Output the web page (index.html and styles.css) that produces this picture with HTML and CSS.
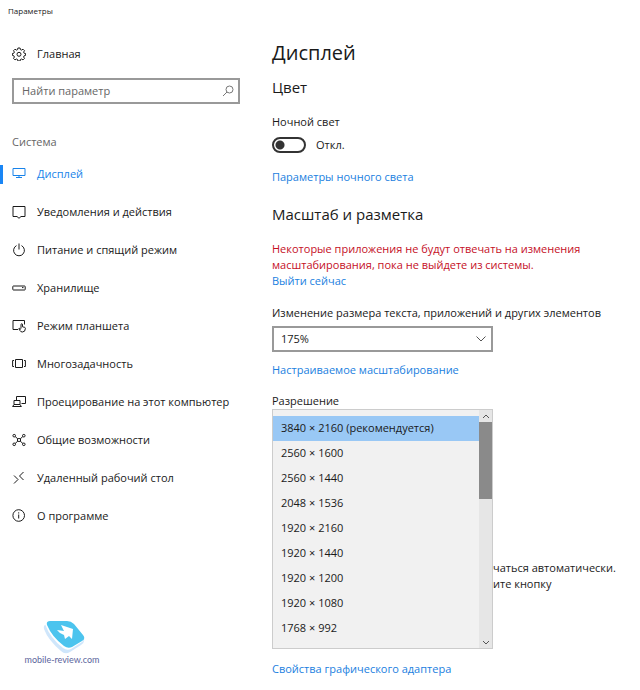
FILE: index.html
```html
<!DOCTYPE html>
<html lang="ru">
<head>
    <meta charset="UTF-8">
    <meta name="viewport" content="width=device-width, initial-scale=1.0">
    <title>Параметры</title>
    <link rel="stylesheet" href="styles.css">
</head>
<body>
    <header class="titlebar">Параметры</header>
    <div class="layout">
        <aside class="sidebar">
            <a class="home" href="#">
                <svg class="icon" viewBox="0 0 14 14"><path d="M5.9 1h2.2l.3 1.6 1.2.5 1.4-.9 1.5 1.5-.9 1.4.5 1.1 1.5.3v1.9l-1.5.4-.5 1.2.9 1.4-1.5 1.5-1.4-.9-1.2.5-.3 1.5H5.900l-.3-1.5-1.200-.5-1.400.9-1.500-1.500.9-1.400-.5-1.200L.4 8.400V6.500l1.500-.3.5-1.100-.9-1.400L3 2.200l1.400.9 1.200-.5z"/><circle cx="7" cy="7.300" r="2"/></svg>
                Главная
            </a>
            <form class="search">
                <input type="search" placeholder="Найти параметр" aria-label="Найти параметр">
                <button type="button" aria-label="Поиск">
                    <svg viewBox="0 0 12 12"><circle cx="7.500" cy="4.500" r="3.500"/><path d="M5 7L1 11"/></svg>
                </button>
            </form>
            <h2 class="group">Система</h2>
            <nav class="menu">
                <a class="active" href="#"><svg class="icon" viewBox="0 0 14 14"><path d="M1 1.500h12v7H1zM7 8.500v2M4 10.500h6"/></svg>Дисплей</a>
                <a href="#"><svg class="icon" viewBox="0 0 14 14"><path d="M1 1.500h12v10H9L7 13.300 5 11.500H1z"/></svg>Уведомления и действия</a>
                <a href="#"><svg class="icon" viewBox="0 0 14 14"><path d="M4.500 2.600a5.400 5.400 0 1 0 5 0M7 .5v6"/></svg>Питание и спящий режим</a>
                <a href="#"><svg class="icon" viewBox="0 0 14 14"><rect x=".8" y="5" width="12.400" height="4" rx=".6"/><path d="M10 6.600h1.500"/></svg>Хранилище</a>
                <a href="#"><svg class="icon" viewBox="0 0 14 14"><path d="M6 10.500H1v-9h11.500v4M9 9.500V5.200q.8-.9 1.500 0v2.600l2.300.6q.7.300.6 1.100-.1 3.500-3 3.500-1.800 0-2.500-1.500L6.800 9.600q.9-.9 2.200.9"/></svg>Режим планшета</a>
                <a href="#"><svg class="icon" viewBox="0 0 14 14"><path d="M3.500 2.500h7v8h-7zM2 3.500H.6v6H2M12 3.500h1.400v6H12"/></svg>Многозадачность</a>
                <a href="#"><svg class="icon" viewBox="0 0 14 14"><path d="M4.500 5.500v-4h9v7H9.500M2 5.500h6v4H2zM2 9.500L.6 11.500h8.800L8 9.500"/></svg>Проецирование на этот компьютер</a>
                <a href="#"><svg class="icon" viewBox="0 0 14 14"><circle cx="2.200" cy="2.700" r="1.300"/><circle cx="11.800" cy="2.700" r="1.300"/><circle cx="2.200" cy="11.300" r="1.300"/><circle cx="11.800" cy="11.300" r="1.300"/><path d="M3.200 3.600l2.300 2M10.800 3.600l-2.300 2M3.200 10.400l2.300-2M10.800 10.400l-2.300-2M5.500 5.600h3v2.800h-3z"/></svg>Общие возможности</a>
                <a href="#"><svg class="icon" viewBox="0 0 14 14"><path d="M2 4.500l4 4-4 4M11.500 1l-4 4 4 4"/></svg>Удаленный рабочий стол</a>
                <a href="#"><svg class="icon" viewBox="0 0 14 14"><circle cx="6.700" cy="6.500" r="5.800"/><path d="M6.700 5.500v4M6.700 3.300v1.200"/></svg>О программе</a>
            </nav>
            <a class="logo" href="#">
                <svg viewBox="0 0 42 34">
                    <path d="M1 9q-1-4 3-5l37 15q1 3-3 6l-11 7q-5 3-9-1Q5 20 1 9z" fill="#cfe6fb"/>
                    <path d="M2 4q0-3 4-3h20q4 0 6 3l8 12q2 4-1 6l-11 7q-4 2-8-1Q7 18 2 4z" fill="#fff"/>
                    <path d="M4 5q-1-4 3-4h17q4 0 7 3l9 11q3 4-1 6l-10 6q-4 2-8-1Q9 17 4 5z" fill="#4cc4ee"/>
                    <path d="M14 10l7 1-3-6 12 4-1 10-3-3-4 3-1-4-4-2z" fill="#fff"/>
                </svg>
                mobile-review.com
            </a>
        </aside>
        <main class="content">
            <h1>Дисплей</h1>
            <section>
                <h2>Цвет</h2>
                <label class="caption" for="night">Ночной свет</label>
                <div class="toggle">
                    <input type="checkbox" id="night">
                    <span>Откл.</span>
                </div>
                <a href="#">Параметры ночного света</a>
            </section>
            <section>
                <h2 class="scale">Масштаб и разметка</h2>
                <p class="warning">Некоторые приложения не будут отвечать на изменения масштабирования, пока не выйдете из системы.</p>
                <a href="#">Выйти сейчас</a>
                <label class="caption size" for="scale">Изменение размера текста, приложений и других элементов</label>
                <div class="dropdown">
                    <select id="scale">
                        <option>175%</option>
                    </select>
                    <svg viewBox="0 0 10 6"><path d="M.5.500L5 5 9.500.5"/></svg>
                </div>
                <a href="#">Настраиваемое масштабирование</a>
                <label class="caption resolution" for="resolution">Разрешение</label>
                <div class="displays">
                    <div class="listbox">
                        <select id="resolution" size="9">
                            <option selected>3840 × 2160 (рекомендуется)</option>
                            <option>2560 × 1600</option>
                            <option>2560 × 1440</option>
                            <option>2048 × 1536</option>
                            <option>1920 × 2160</option>
                            <option>1920 × 1440</option>
                            <option>1920 × 1200</option>
                            <option>1920 × 1080</option>
                            <option>1768 × 992</option>
                        </select>
                        <div class="scrollbar">
                            <button type="button" aria-label="Вверх"><svg viewBox="0 0 8 5"><path d="M1 4l3-3 3 3"/></svg></button>
                            <div class="thumb"></div>
                            <button type="button" class="down" aria-label="Вниз"><svg viewBox="0 0 8 5"><path d="M1 1l3 3 3-3"/></svg></button>
                        </div>
                    </div>
                    <p class="hint">чаться автоматически.<br>ите кнопку</p>
                </div>
                <a href="#">Свойства графического адаптера</a>
            </section>
        </main>
    </div>
</body>
</html>
```
FILE: styles.css
```css
* {
    box-sizing: border-box;
}
body {
    margin: 0;
    background: #fff;
    color: #1a1a1a;
    font: 11px/16px "Open Sans", "Noto Sans", sans-serif;
}
h1, h2, p {
    margin: 0;
    font-weight: normal;
}
a {
    color: #1a80e0;
    text-decoration: none;
}
svg {
    fill: none;
    stroke: currentColor;
}
input, select, button {
    font: inherit;
    color: inherit;
    border-radius: 0;
}
button {
    padding: 0;
    border: 0;
    background: none;
}
.titlebar {
    padding: 3px 8px;
    font-size: 8px;
}
.layout {
    display: grid;
    grid-template-columns: 272px 1fr;
}

/* Левая панель */
.home {
    display: flex;
    align-items: center;
    gap: 11px;
    margin-top: 22px;
    padding: 2px 12px;
    height: 20px;
    color: #1a1a1a;
}
.icon {
    flex: none;
    width: 14px;
    height: 14px;
}
.search {
    display: flex;
    align-items: center;
    margin: 14px 32px 0 12px;
    height: 26px;
    padding: 0 4px 0 8px;
    border: 2px solid #999;
    color: #666;
}
.search input {
    flex: 1;
    min-width: 0;
    padding: 0;
    border: 0;
    outline: 0;
    background: none;
    appearance: none;
}
.search input::placeholder {
    color: #666;
}
.search button, .search svg {
    display: block;
    width: 12px;
    height: 12px;
    color: #777;
}
.group {
    margin: 30px 12px 5px;
    font-size: 11px;
    line-height: 16px;
    color: #666;
}
.menu a {
    display: flex;
    align-items: center;
    gap: 11px;
    height: 38px;
    padding-left: 12px;
    color: #1a1a1a;
}
.menu .active {
    color: #1883ea;
    background: linear-gradient(#1a86f5, #1a86f5) 0 50% / 3px 19px no-repeat;
}
.logo {
    display: flex;
    flex-direction: column;
    align-items: center;
    width: 76px;
    margin: 85px 0 0 24px;
    font: 9px/12px Lato, sans-serif;
    white-space: nowrap;
    color: #5a649c;
}
.logo svg {
    width: 42px;
    height: 34px;
    margin-left: 4px;
    stroke: none;
}

/* Правая часть */
.content {
    padding: 17px 16px 12px 0;
}
.content a, .caption {
    display: block;
}
.content h1 {
    font-size: 20px;
    line-height: 28px;
    margin-bottom: 10px;
}
.content h2 {
    font-size: 15px;
    line-height: 20px;
    margin-bottom: 17px;
}
.content .scale {
    margin-top: 19px;
}
.toggle {
    display: flex;
    align-items: center;
    gap: 10px;
    margin: 6px 0 16px;
    height: 17px;
}
.toggle input {
    appearance: none;
    width: 34px;
    height: 16px;
    margin: 0;
    border: 2px solid #333;
    border-radius: 8px;
    background: radial-gradient(circle at 6px 50%, #333 4px, transparent 5px);
}
.warning {
    color: #c50f1f;
}
.size {
    margin-top: 16px;
}
.dropdown {
    display: grid;
    align-items: center;
    width: 221px;
    margin: 5px 0 10px;
}
.dropdown select, .dropdown svg {
    grid-area: 1 / 1;
}
.dropdown select {
    width: 100%;
    height: 26px;
    padding: 0 7px;
    border: 2px solid #999;
    background: #fff;
    appearance: none;
}
.dropdown svg {
    justify-self: end;
    width: 10px;
    height: 6px;
    margin-right: 7px;
    color: #555;
    pointer-events: none;
}
.resolution {
    margin-top: 15px;
}
.displays {
    display: flex;
    align-items: center;
    margin-bottom: 12px;
}
.listbox {
    display: flex;
    width: 221px;
    height: 240px;
    border: 1px solid #ccc;
    background: #f1f1f1;
}
.listbox select {
    flex: 1;
    min-width: 0;
    padding: 6px 0 0;
    border: 0;
    outline: 0;
    background: none;
    overflow: hidden;
}
.listbox option {
    height: 25px;
    min-height: 25px;
    padding: 4px 8px;
    line-height: 17px;
}
.listbox option:checked {
    background: linear-gradient(#99c8f5, #99c8f5);
    color: #1a1a1a;
}
.scrollbar {
    display: flex;
    flex-direction: column;
    width: 13px;
    background: #e6e6e6;
    color: #555;
}
.scrollbar button {
    display: grid;
    place-items: center;
    height: 12px;
}
.scrollbar svg {
    width: 8px;
    height: 5px;
}
.scrollbar .down {
    margin-top: auto;
}
.thumb {
    height: 77px;
    background: #8a8a8a;
}
.hint {
    padding-top: 93px;
    white-space: nowrap;
}
```
